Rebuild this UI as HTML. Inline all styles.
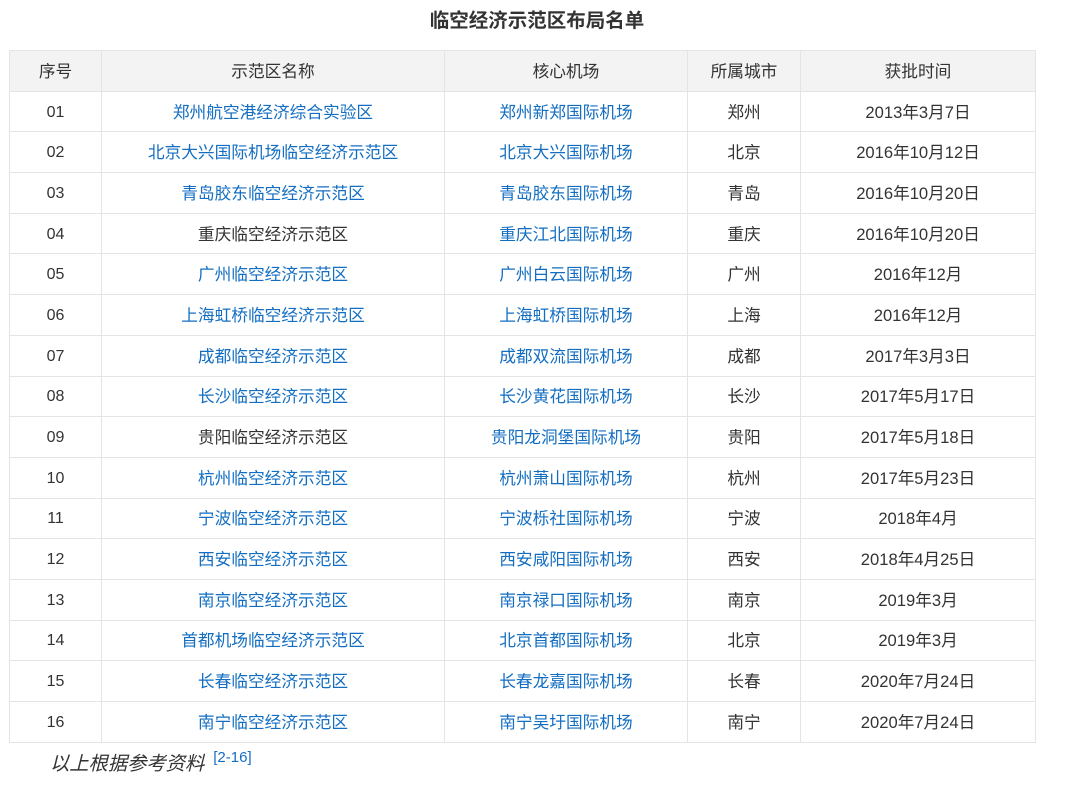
<!DOCTYPE html>
<html><head><meta charset="utf-8"><style>
body{margin:0;background:#fff;font-family:"Liberation Sans","Noto Sans CJK SC",sans-serif;color:#333;width:1080px;height:791px;overflow:hidden;position:relative}
.t{position:absolute;top:8px;left:-3px;width:1080px;text-align:center;font-size:19.5px;font-weight:bold;color:#333;line-height:26px}
table{position:absolute;left:9px;top:50px;border-collapse:collapse;table-layout:fixed;width:1026px}
td,th{border:1px solid #e4e4e4;text-align:center;font-size:16.7px;height:37.7px;padding:2px 0 0 0;font-weight:normal;vertical-align:middle;line-height:20px}
td:first-child{font-size:16px}
td:last-child{font-size:16.6px}
th{background:#f3f3f3;color:#333;font-weight:normal}
a{color:#136ec2;text-decoration:none}
.f{position:absolute;left:50px;top:748px;font-size:19.3px;font-style:italic;color:#333}
.f sup{font-style:normal;color:#136ec2;font-size:15px;margin-left:9px;vertical-align:8px}
</style></head><body>
<div class="t">临空经济示范区布局名单</div>
<table>
<colgroup><col style="width:92px"><col style="width:343px"><col style="width:243px"><col style="width:113px"><col style="width:235px"></colgroup>
<tr><th>序号</th><th>示范区名称</th><th>核心机场</th><th>所属城市</th><th>获批时间</th></tr>
<tr><td>01</td><td><a>郑州航空港经济综合实验区</a></td><td><a>郑州新郑国际机场</a></td><td>郑州</td><td>2013年3月7日</td></tr>
<tr><td>02</td><td><a>北京大兴国际机场临空经济示范区</a></td><td><a>北京大兴国际机场</a></td><td>北京</td><td>2016年10月12日</td></tr>
<tr><td>03</td><td><a>青岛胶东临空经济示范区</a></td><td><a>青岛胶东国际机场</a></td><td>青岛</td><td>2016年10月20日</td></tr>
<tr><td>04</td><td>重庆临空经济示范区</td><td><a>重庆江北国际机场</a></td><td>重庆</td><td>2016年10月20日</td></tr>
<tr><td>05</td><td><a>广州临空经济示范区</a></td><td><a>广州白云国际机场</a></td><td>广州</td><td>2016年12月</td></tr>
<tr><td>06</td><td><a>上海虹桥临空经济示范区</a></td><td><a>上海虹桥国际机场</a></td><td>上海</td><td>2016年12月</td></tr>
<tr><td>07</td><td><a>成都临空经济示范区</a></td><td><a>成都双流国际机场</a></td><td>成都</td><td>2017年3月3日</td></tr>
<tr><td>08</td><td><a>长沙临空经济示范区</a></td><td><a>长沙黄花国际机场</a></td><td>长沙</td><td>2017年5月17日</td></tr>
<tr><td>09</td><td>贵阳临空经济示范区</td><td><a>贵阳龙洞堡国际机场</a></td><td>贵阳</td><td>2017年5月18日</td></tr>
<tr><td>10</td><td><a>杭州临空经济示范区</a></td><td><a>杭州萧山国际机场</a></td><td>杭州</td><td>2017年5月23日</td></tr>
<tr><td>11</td><td><a>宁波临空经济示范区</a></td><td><a>宁波栎社国际机场</a></td><td>宁波</td><td>2018年4月</td></tr>
<tr><td>12</td><td><a>西安临空经济示范区</a></td><td><a>西安咸阳国际机场</a></td><td>西安</td><td>2018年4月25日</td></tr>
<tr><td>13</td><td><a>南京临空经济示范区</a></td><td><a>南京禄口国际机场</a></td><td>南京</td><td>2019年3月</td></tr>
<tr><td>14</td><td><a>首都机场临空经济示范区</a></td><td><a>北京首都国际机场</a></td><td>北京</td><td>2019年3月</td></tr>
<tr><td>15</td><td><a>长春临空经济示范区</a></td><td><a>长春龙嘉国际机场</a></td><td>长春</td><td>2020年7月24日</td></tr>
<tr><td>16</td><td><a>南宁临空经济示范区</a></td><td><a>南宁吴圩国际机场</a></td><td>南宁</td><td>2020年7月24日</td></tr>
</table>
<div class="f">以上根据参考资料<sup>[2-16]</sup></div>
</body></html>
